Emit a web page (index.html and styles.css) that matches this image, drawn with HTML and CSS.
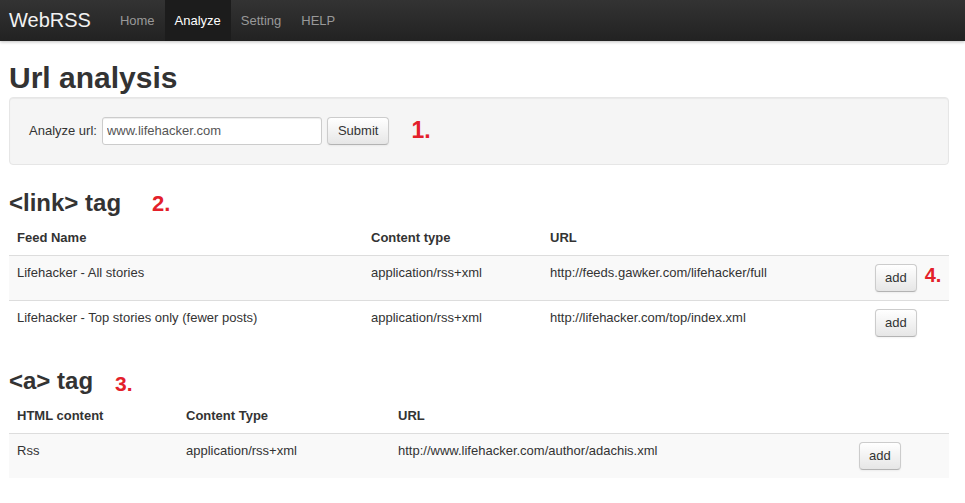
FILE: index.html
```html
<!DOCTYPE html>
<html>
<head>
<meta charset="utf-8">
<title>WebRSS - Analyze</title>
<link rel="stylesheet" href="styles.css">
</head>
<body>
<div class="navbar">
  <div class="navbar-inner">
    <a class="brand" href="#">WebRSS</a>
    <ul class="nav">
      <li><a href="#">Home</a></li>
      <li class="active"><a href="#">Analyze</a></li>
      <li><a href="#">Setting</a></li>
      <li><a href="#">HELP</a></li>
    </ul>
  </div>
</div>
<div class="container">
  <h1>Url analysis</h1>
  <div class="well">
    <form class="url-form"><label class="url-label">Analyze url:</label><input class="url-input" type="text" value="www.lifehacker.com"><button class="btn" type="button">Submit</button><span class="mark mark-1">1.</span></form>
  </div>

  <h2>&lt;link&gt; tag<span class="mark mark-2">2.</span></h2>
  <table class="table">
    <colgroup>
      <col class="c1-name"><col class="c1-type"><col class="c1-url"><col class="c1-act">
    </colgroup>
    <thead>
      <tr><th>Feed Name</th><th>Content type</th><th>URL</th><th></th></tr>
    </thead>
    <tbody>
      <tr class="odd"><td>Lifehacker - All stories</td><td>application/rss+xml</td><td>http://feeds.gawker.com/lifehacker/full</td><td class="act"><button class="btn btn-add" type="button">add</button><span class="mark mark-4">4.</span></td></tr>
      <tr><td>Lifehacker - Top stories only (fewer posts)</td><td>application/rss+xml</td><td>http://lifehacker.com/top/index.xml</td><td class="act"><button class="btn btn-add" type="button">add</button></td></tr>
    </tbody>
  </table>

  <h2>&lt;a&gt; tag<span class="mark mark-3">3.</span></h2>
  <table class="table">
    <colgroup>
      <col class="c2-html"><col class="c2-type"><col class="c2-url"><col class="c2-act">
    </colgroup>
    <thead>
      <tr><th>HTML content</th><th>Content Type</th><th>URL</th><th></th></tr>
    </thead>
    <tbody>
      <tr class="odd"><td>Rss</td><td>application/rss+xml</td><td>http://www.lifehacker.com/author/adachis.xml</td><td class="act"><button class="btn btn-add" type="button">add</button></td></tr>
    </tbody>
  </table>
</div>
</body>
</html>
```
FILE: styles.css
```css
* { box-sizing: content-box; }
html, body { margin: 0; padding: 0; }
body {
  font-family: "Liberation Sans", Arial, sans-serif;
  font-size: 13px;
  line-height: 18px;
  color: #333;
  background: #fff;
}

/* navbar */
.navbar {
  height: 41px;
  background: linear-gradient(#333333, #222222);
  box-shadow: 0 1px 3px rgba(0,0,0,0.25);
}
.navbar-inner {
  display: flex;
  margin-left: 9px;
  height: 41px;
}
.brand {
  font-size: 20px;
  line-height: 41px;
  color: #f2f2f2;
  text-decoration: none;
  padding-right: 19px;
}
.nav {
  display: flex;
  list-style: none;
  margin: 0;
  padding: 0;
}
.nav a {
  display: block;
  padding: 0 10px;
  line-height: 41px;
  color: #999;
  text-decoration: none;
  font-size: 13px;
}
.nav .active a {
  color: #fff;
  background: #1c1c1c;
}

.container {
  width: 940px;
  margin-left: 9px;
}

h1 {
  font-size: 30px;
  line-height: 36px;
  font-weight: bold;
  margin: 19px 0 1px;
}
h2 {
  font-size: 24px;
  line-height: 36px;
  font-weight: bold;
  margin: 0;
}

.well {
  background: #f5f5f5;
  border: 1px solid #e6e6e6;
  border-radius: 4px;
  box-shadow: inset 0 1px 1px rgba(0,0,0,0.05);
  padding: 19px;
  margin-bottom: 20px;
}
.url-form { margin: 0; }
.url-label { margin-right: 5px; }
.url-input {
  width: 210px;
  height: 18px;
  padding: 4px;
  font-family: inherit;
  font-size: 13px;
  line-height: 18px;
  color: #555;
  border: 1px solid #ccc;
  border-radius: 3px;
  box-shadow: inset 0 1px 1px rgba(0,0,0,0.075);
  background: #fff;
  margin: 0 5px 0 0;
  vertical-align: baseline;
}

.btn {
  display: inline-block;
  padding: 4px 10px;
  font-family: inherit;
  font-size: 13px;
  line-height: 18px;
  color: #333;
  background: linear-gradient(#ffffff, #e6e6e6);
  border: 1px solid #ccc;
  border-bottom-color: #b3b3b3;
  border-radius: 4px;
  box-shadow: inset 0 1px 0 rgba(255,255,255,0.2), 0 1px 2px rgba(0,0,0,0.05);
  margin: 0;
  vertical-align: baseline;
}
.btn-add { padding: 4px 9px; }

.mark {
  color: #e3202a;
  font-weight: bold;
  line-height: 18px;
}
.mark-1 { font-size: 23px; margin-left: 22px; vertical-align: -3px; }
.mark-2 { font-size: 22px; margin-left: 31px; }
.mark-3 { font-size: 21px; margin-left: 22px; vertical-align: -2px; }
.mark-4 { font-size: 20px; margin-left: 8px; }

.table {
  width: 940px;
  table-layout: fixed;
  border-collapse: collapse;
  border-spacing: 0;
  margin-bottom: 18px;
}
.table th, .table td {
  padding: 8px;
  text-align: left;
  vertical-align: top;
  line-height: 18px;
}
.table th {
  font-weight: bold;
  vertical-align: bottom;
}
.table td { border-top: 1px solid #ddd; }
.table td.act { white-space: nowrap; overflow: visible; }
.table tr.odd td { background: #f9f9f9; }

.c1-name { width: 354px; }
.c1-type { width: 179px; }
.c1-url { width: 325px; }
.c1-act { width: 82px; }

.c2-html { width: 169px; }
.c2-type { width: 212px; }
.c2-url { width: 461px; }
.c2-act { width: 98px; }
```
